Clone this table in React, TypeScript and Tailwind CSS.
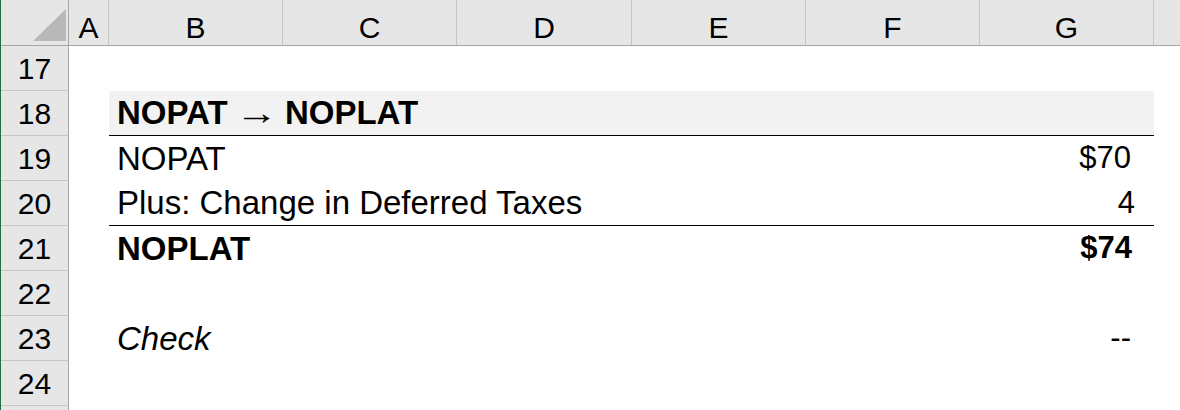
import type { ReactNode } from "react";

const columns = [
  { label: "A", width: "w-[40px]" },
  { label: "B", width: "w-[174px]" },
  { label: "C", width: "w-[174px]" },
  { label: "D", width: "w-[175px]" },
  { label: "E", width: "w-[174px]" },
  { label: "F", width: "w-[174px]" },
  { label: "G", width: "w-[174px]" },
];

type Row = {
  num: string;
  label?: ReactNode;
  value?: string;
  kind?: "heading" | "bold" | "italic" | "underline";
  valuePad?: string;
};

const heading = (
  <>
    NOPAT{" "}
    <span className="mx-[3px] inline-block scale-x-[1.3] font-normal">→</span>{" "}
    NOPLAT
  </>
);

const rows: Row[] = [
  { num: "17" },
  { num: "18", label: heading, kind: "heading" },
  { num: "19", label: "NOPAT", value: "$70", valuePad: "pr-[23px]" },
  { num: "20", label: "Plus: Change in Deferred Taxes", value: "4", kind: "underline", valuePad: "pr-[19px]" },
  { num: "21", label: "NOPLAT", value: "$74", kind: "bold", valuePad: "pr-[22px]" },
  { num: "22" },
  { num: "23", label: "Check", value: "--", kind: "italic", valuePad: "pr-[23px]" },
  { num: "24" },
  { num: "" },
];

function SheetRow({ row }: { row: Row }) {
  const span =
    row.kind === "heading"
      ? "bg-[#f2f2f2] border-b border-black font-bold"
      : row.kind === "underline"
        ? "border-b border-black"
        : row.kind === "bold"
          ? "font-bold"
          : "";

  return (
    <div className="flex h-[45px] shrink-0">
      <div className="flex w-[68px] shrink-0 items-center justify-center border-r border-b border-r-[#a6a6a6] border-b-[#c6c6c6] bg-[#e6e6e6] text-[30px] text-black">
        {row.num}
      </div>
      <div className="w-[40px] shrink-0" />
      <div
        className={`flex w-[1045px] shrink-0 items-center justify-between pl-2 text-black ${span}`}
      >
        <span className={`text-[33px] ${row.kind === "italic" ? "italic" : ""}`}>
          {row.label}
        </span>
        <span className={`text-[31px] ${row.valuePad ?? "pr-[20px]"}`}>{row.value}</span>
      </div>
      <div className="flex-1" />
    </div>
  );
}

export default function App() {
  return (
    <div className="flex h-[410px] w-[1180px] flex-col overflow-hidden border-l border-[#1f6e43] bg-white font-['Liberation_Sans',Arial,sans-serif]">
      <div className="flex h-[46px] shrink-0 border-b border-[#a6a6a6] bg-[#e6e6e6]">
        <div className="w-[68px] shrink-0 border-r border-[#a6a6a6]">
          <svg width="68" height="45" viewBox="0 0 68 45">
            <polygon points="32,41 65,41 65,9" fill="#b8b8b8" />
          </svg>
        </div>
        {columns.map((c) => (
          <div
            key={c.label}
            className={`flex ${c.width} shrink-0 justify-center border-r border-[#c6c6c6] pt-[11px] text-[30px] leading-[34px] text-black`}
          >
            {c.label}
          </div>
        ))}
        <div className="flex-1" />
      </div>
      {rows.map((r, i) => (
        <SheetRow key={i} row={r} />
      ))}
    </div>
  );
}
